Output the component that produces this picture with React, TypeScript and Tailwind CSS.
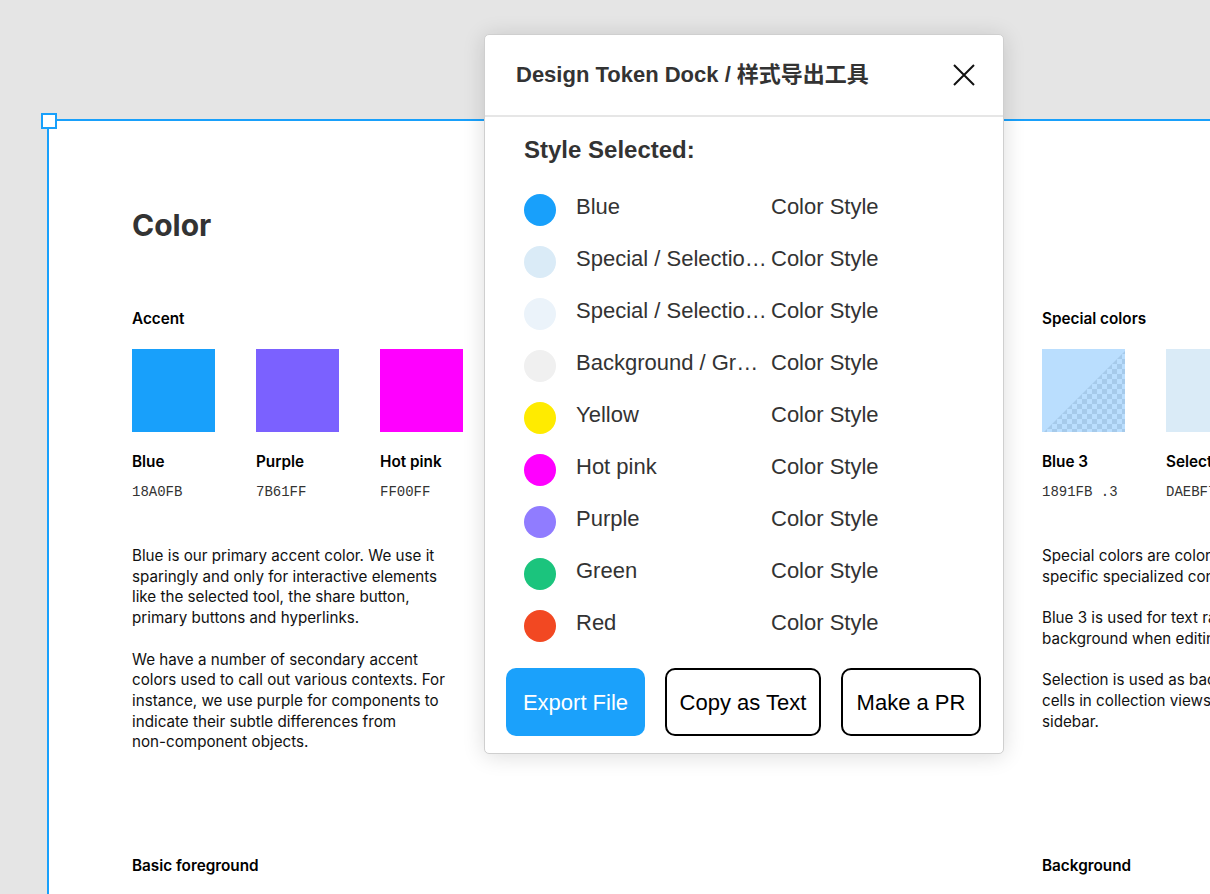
import React from "react";

const inter = { fontFamily: "Inter, 'Noto Sans', sans-serif" };

type Sw = { name: string; code: string; color?: string; checker?: boolean };

function Swatch({ s }: { s: Sw }) {
  return (
    <div className="flex w-[83px] flex-col">
      {s.checker ? (
        <svg width="83" height="83" viewBox="0 0 83 83" className="block">
          <defs>
            <pattern id="chk" width="10" height="10" patternUnits="userSpaceOnUse">
              <rect width="10" height="10" fill="#BADEFE" />
              <rect width="5" height="5" fill="#A6CAEA" />
              <rect x="5" y="5" width="5" height="5" fill="#A6CAEA" />
            </pattern>
            <clipPath id="tri">
              <polygon points="83,2 83,83 2,83" />
            </clipPath>
          </defs>
          <rect width="83" height="83" fill="#BADEFE" />
          <rect width="83" height="83" fill="url(#chk)" clipPath="url(#tri)" />
        </svg>
      ) : (
        <div className="h-[83px] w-[83px]" style={{ backgroundColor: s.color }} />
      )}
      <div className="mt-[20px] whitespace-nowrap text-[15.3px] font-semibold leading-[20px] text-black" style={inter}>
        {s.name}
      </div>
      <div
        className="mt-[10px] whitespace-nowrap text-[14px] leading-[20px] text-[#333]"
        style={{ fontFamily: "'Liberation Mono', 'DejaVu Sans Mono', monospace" }}
      >
        {s.code}
      </div>
    </div>
  );
}

function Para({ lines, first }: { lines: string[]; first?: boolean }) {
  return (
    <p
      className={`${first ? "mt-[44px]" : "mt-[20.7px]"} whitespace-nowrap text-[15.2px] leading-[20.7px] text-[#111]`}
      style={inter}
    >
      {lines.map((l, i) => (
        <React.Fragment key={i}>
          {l}
          {i < lines.length - 1 && <br />}
        </React.Fragment>
      ))}
    </p>
  );
}

const rows = [
  { name: "Blue", color: "#18A0FB" },
  { name: "Special / Selection Blue", color: "#DAEBF7" },
  { name: "Special / Selection Light", color: "#EBF3FA" },
  { name: "Background / Grey 1", color: "#F0F0F0" },
  { name: "Yellow", color: "#FFEB00" },
  { name: "Hot pink", color: "#FF00FF" },
  { name: "Purple", color: "#907CFF" },
  { name: "Green", color: "#1BC47D" },
  { name: "Red", color: "#F24822" },
];

export default function App() {
  const sans = { fontFamily: "'Liberation Sans', Arial, 'Noto Sans CJK SC', sans-serif" };
  return (
    <div className="relative h-[894px] w-[1210px] overflow-hidden bg-[#e5e5e5] pl-[47px] pt-[119px]">
      {/* Canvas frame */}
      <div className="relative h-[900px] w-[1400px] border-l-2 border-t-2 border-[#18A0FB] bg-white pl-[83px] pt-[86px]">
        <div className="absolute -left-[8px] -top-[8px] h-[16px] w-[16px] border-2 border-[#18A0FB] bg-white" />
        <h2 className="text-[30px] font-bold leading-[36px] text-[#333]" style={inter}>
          Color
        </h2>
        <div className="mt-[66px] grid grid-cols-[455px_455px_455px] items-start">
          <div className="flex flex-col">
            <div className="text-[15.3px] font-semibold leading-[20px] text-black" style={inter}>
              Accent
            </div>
            <div className="mt-[20px] flex gap-[41px]">
              <Swatch s={{ name: "Blue", code: "18A0FB", color: "#18A0FB" }} />
              <Swatch s={{ name: "Purple", code: "7B61FF", color: "#7B61FF" }} />
              <Swatch s={{ name: "Hot pink", code: "FF00FF", color: "#FF00FF" }} />
            </div>
            <Para
              first
              lines={[
                "Blue is our primary accent color. We use it",
                "sparingly and only for interactive elements",
                "like the selected tool, the share button,",
                "primary buttons and hyperlinks.",
              ]}
            />
            <Para
              lines={[
                "We have a number of secondary accent",
                "colors used to call out various contexts. For",
                "instance, we use purple for components to",
                "indicate their subtle differences from",
                "non-component objects.",
              ]}
            />
          </div>
          <div />
          <div className="flex flex-col">
            <div className="text-[15.3px] font-semibold leading-[20px] text-black" style={inter}>
              Special colors
            </div>
            <div className="mt-[20px] flex gap-[41px]">
              <Swatch s={{ name: "Blue 3", code: "1891FB .3", checker: true }} />
              <Swatch s={{ name: "Selection", code: "DAEBF7", color: "#DAEBF7" }} />
            </div>
            <Para
              first
              lines={["Special colors are colors used for", "specific specialized contexts."]}
            />
            <Para
              lines={["Blue 3 is used for text range selection", "background when editing text."]}
            />
            <Para
              lines={[
                "Selection is used as background for",
                "cells in collection views, like the layers",
                "sidebar.",
              ]}
            />
          </div>
        </div>
        <div className="mt-[103px] grid grid-cols-[455px_455px_455px]">
          <div className="text-[15.3px] font-semibold leading-[20px] text-black" style={inter}>
            Basic foreground
          </div>
          <div />
          <div className="text-[15.3px] font-semibold leading-[20px] text-black" style={inter}>
            Background
          </div>
        </div>
      </div>

      {/* Plugin dialog */}
      <div
        className="absolute left-[484px] top-[34px] flex h-[720px] w-[520px] flex-col rounded-[5px] border border-[#cfcfcf] bg-white shadow-[0_2px_22px_rgba(0,0,0,0.14)]"
        style={sans}
      >
        <div className="flex h-[82px] items-center justify-between border-b-2 border-[#e6e6e6] pl-[31px] pr-[28px]">
          <div className="text-[22px] font-bold leading-[28px] text-[#333]">
            Design Token Dock / 样式导出工具
          </div>
          <svg width="22" height="22" viewBox="0 0 22 22" className="block">
            <path d="M1 1 L21 21 M21 1 L1 21" stroke="#111" strokeWidth="2" fill="none" />
          </svg>
        </div>
        <div className="flex flex-col pl-[39px]">
          <div className="mt-[19px] text-[24px] font-bold leading-[28px] text-[#333]">Style Selected:</div>
          <div className="mt-[20px] flex flex-col">
            {rows.map((r) => (
              <div key={r.name} className="flex h-[52px] items-center">
                <div className="h-8 w-8 shrink-0 rounded-full" style={{ backgroundColor: r.color }} />
                <div className="ml-5 w-[193px] truncate whitespace-nowrap pb-[6px] text-[22px] leading-[26px] text-[#333]">
                  {r.name}
                </div>
                <div className="ml-[2px] whitespace-nowrap pb-[6px] text-[22px] leading-[26px] text-[#333]">
                  Color Style
                </div>
              </div>
            ))}
          </div>
        </div>
        <div className="mt-[16px] flex gap-5 pl-[21px]">
          <button className="flex h-[68px] w-[139px] items-center justify-center rounded-[10px] bg-[#1BA1FB] text-[22px] text-white">
            Export File
          </button>
          <button className="flex h-[68px] w-[156px] items-center justify-center rounded-[10px] border-2 border-black bg-white text-[22px] text-black">
            Copy as Text
          </button>
          <button className="flex h-[68px] w-[140px] items-center justify-center rounded-[10px] border-2 border-black bg-white text-[22px] text-black">
            Make a PR
          </button>
        </div>
      </div>
    </div>
  );
}
